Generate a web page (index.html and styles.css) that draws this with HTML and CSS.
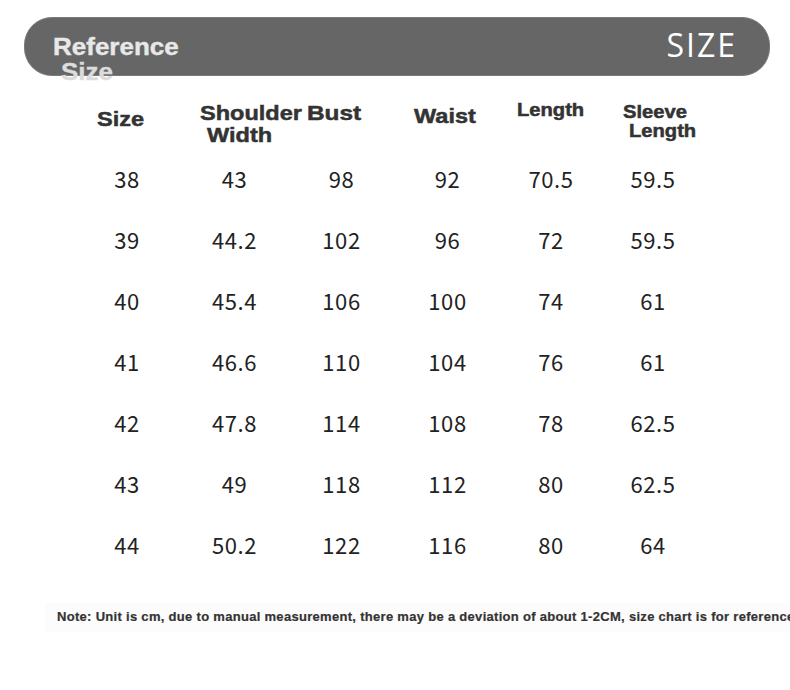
FILE: index.html
```html
<!DOCTYPE html>
<html>
<head>
<meta charset="utf-8">
<link rel="stylesheet" href="styles.css">
</head>
<body>
<div class="page">
  <div class="banner">
    <div class="banner-left"><span class="ref-line">Reference</span><span class="ref-line ref-second">Size</span></div>
    <div class="banner-right">SIZE</div>
  </div>

  <div class="head-row">
    <div class="hcell h-size"><span class="st">Size</span></div>
    <div class="hcell h-shoulder"><span class="st">Shoulder</span><span class="st second">Width</span></div>
    <div class="hcell h-bust"><span class="st">Bust</span></div>
    <div class="hcell h-waist"><span class="st">Waist</span></div>
    <div class="hcell small h-length"><span class="st">Length</span></div>
    <div class="hcell small h-sleeve"><span class="st">Sleeve</span><span class="st second">Length</span></div>
  </div>

  <div class="data">
    <div>38</div><div>43</div><div>98</div><div>92</div><div>70.5</div><div>59.5</div>
    <div>39</div><div>44.2</div><div>102</div><div>96</div><div>72</div><div>59.5</div>
    <div>40</div><div>45.4</div><div>106</div><div>100</div><div>74</div><div>61</div>
    <div>41</div><div>46.6</div><div>110</div><div>104</div><div>76</div><div>61</div>
    <div>42</div><div>47.8</div><div>114</div><div>108</div><div>78</div><div>62.5</div>
    <div>43</div><div>49</div><div>118</div><div>112</div><div>80</div><div>62.5</div>
    <div>44</div><div>50.2</div><div>122</div><div>116</div><div>80</div><div>64</div>
  </div>

  <div class="note">Note: Unit is cm, due to manual measurement, there may be a deviation of about 1-2CM, size chart is for reference only</div>
</div>
</body>
</html>
```
FILE: styles.css
```css
html, body {
  margin: 0;
  padding: 0;
  background: #ffffff;
}
body {
  width: 790px;
  height: 690px;
  overflow: hidden;
}
.page {
  padding-top: 17px;
}
.banner {
  box-sizing: border-box;
  margin-left: 24px;
  width: 746px;
  height: 59px;
  border-radius: 28px;
  background: #666666;
  border: 1px solid #7a7a7a;
  display: flex;
  justify-content: space-between;
  align-items: flex-start;
  padding: 0 32px 0 28px;
}
.banner-left {
  display: flex;
  flex-direction: column;
  align-items: flex-start;
  margin-top: 17px;
  font-family: "Liberation Sans", Arial, sans-serif;
  font-weight: bold;
  font-size: 23px;
  line-height: 25px;
  color: #e8e8e8;
  -webkit-text-stroke: 0.4px #e8e8e8;
}
.ref-line {
  display: inline-block;
  transform: scaleX(1.13);
  transform-origin: left center;
}
.ref-second {
  margin-left: 8px;
  color: #dcdcdc;
  -webkit-text-stroke: 0.4px #dcdcdc;
}
.banner-right {
  margin-top: 12px;
  font-family: "Open Sans", sans-serif;
  font-size: 32px;
  line-height: 30px;
  letter-spacing: 2px;
  color: #ffffff;
}

.head-row {
  margin-top: 25px;
  margin-left: 97px;
  height: 47px;
  display: grid;
  grid-template-columns: 103px 107px 107px 103px 106px 100px;
  align-items: start;
  font-family: "Liberation Sans", Arial, sans-serif;
  font-weight: bold;
  font-size: 21px;
  line-height: 22px;
  color: #333333;
  -webkit-text-stroke: 0.5px #333333;
}
.hcell {
  display: flex;
  flex-direction: column;
  align-items: flex-start;
  white-space: nowrap;
}
.st {
  display: inline-block;
  transform: scaleX(1.12);
  transform-origin: left center;
}
.hcell.small {
  font-size: 18px;
  line-height: 19px;
}
.second {
  margin-left: 7px;
}
.h-size { margin-top: 7px; }
.h-shoulder { margin-top: 1px; }
.h-bust { margin-top: 1px; }
.h-bust .st { transform: scaleX(1.16); }
.h-waist { margin-top: 4px; }
.h-length { margin-top: 0; }
.h-sleeve { margin-top: 2px; }
.h-sleeve .second { margin-left: 6px; }

.data {
  margin-left: 73px;
  display: grid;
  grid-template-columns: 108px 107px 107px 105px 102px 102px;
  grid-auto-rows: 61px;
  font-family: "Noto Sans CJK SC", "Noto Sans", sans-serif;
  font-size: 22px;
  line-height: 61px;
  letter-spacing: 0.6px;
  color: #222222;
  text-align: center;
}

.note {
  margin-top: 28px;
  margin-left: 45px;
  padding: 7px 0 8px 12px;
  background: #fcfcfc;
  white-space: nowrap;
  font-family: "Liberation Sans", Arial, sans-serif;
  font-weight: bold;
  font-size: 13px;
  line-height: 14px;
  letter-spacing: 0.3px;
  color: #333333;
  -webkit-text-stroke: 0.2px #333333;
}
```
